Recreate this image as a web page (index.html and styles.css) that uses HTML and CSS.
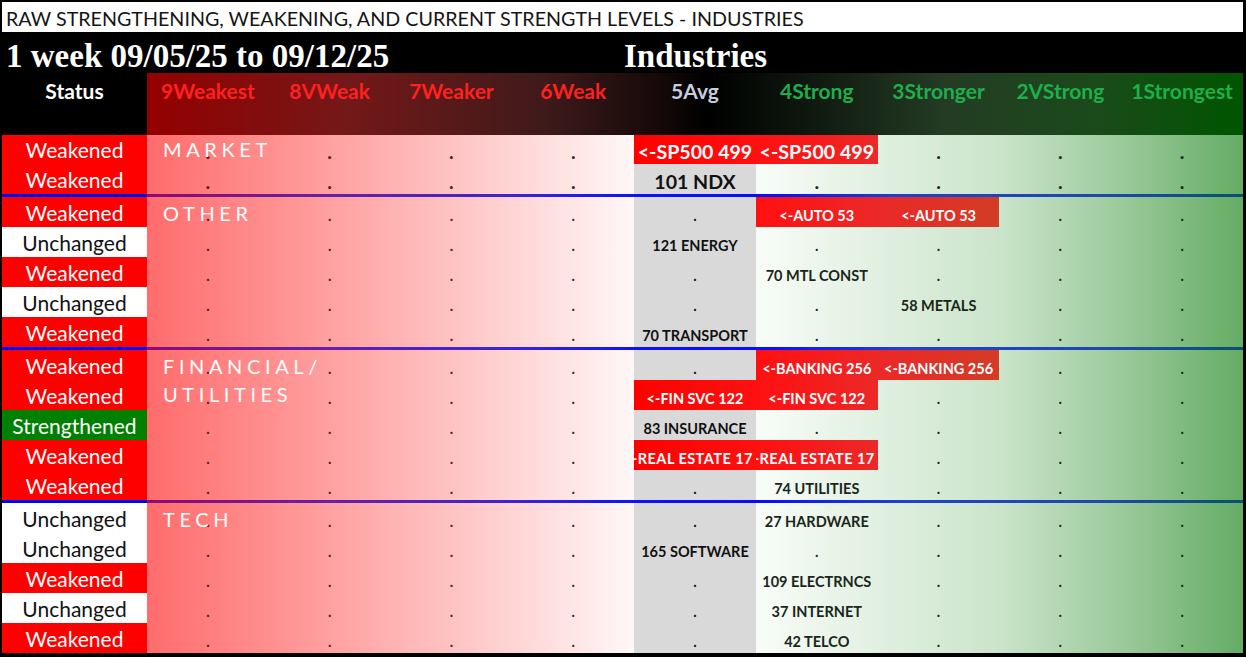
FILE: index.html
```html
<!DOCTYPE html>
<html>
<head>
<meta charset="utf-8">
<link rel="stylesheet" href="styles.css">
</head>
<body>
<div class="frame">
  <div class="title">RAW STRENGTHENING, WEAKENING, AND CURRENT STRENGTH LEVELS - INDUSTRIES</div>
  <div class="head1"><span class="period">1 week 09/05/25 to 09/12/25</span><span class="ind">Industries</span></div>
  <div class="head2">
    <div class="hl st-h">Status</div>
    <div class="hl red-t">9Weakest</div>
    <div class="hl red-t">8VWeak</div>
    <div class="hl red-t">7Weaker</div>
    <div class="hl red-t">6Weak</div>
    <div class="hl avg-t">5Avg</div>
    <div class="hl grn-t">4Strong</div>
    <div class="hl grn-t">3Stronger</div>
    <div class="hl grn-t">2VStrong</div>
    <div class="hl grn-t">1Strongest</div>
  </div>

  <div class="section market">
    <div class="label">MARKET</div>
    <div class="row">
      <div class="st wk">Weakened</div>
      <div class="c l">.</div><div class="c l">.</div><div class="c l">.</div><div class="c l">.</div>
      <div class="c red r5">&lt;-SP500 499</div>
      <div class="c red r6">&lt;-SP500 499</div>
      <div class="c g">.</div><div class="c g">.</div><div class="c g">.</div>
    </div>
    <div class="row">
      <div class="st wk">Weakened</div>
      <div class="c l">.</div><div class="c l">.</div><div class="c l">.</div><div class="c l">.</div>
      <div class="c m">101 NDX</div>
      <div class="c g">.</div><div class="c g">.</div><div class="c g">.</div><div class="c g">.</div>
    </div>
  </div>
  <div class="sep"></div>

  <div class="section">
    <div class="label">OTHER</div>
    <div class="row">
      <div class="st wk">Weakened</div>
      <div class="c l">.</div><div class="c l">.</div><div class="c l">.</div><div class="c l">.</div>
      <div class="c m">.</div>
      <div class="c red r6">&lt;-AUTO 53</div>
      <div class="c red r7">&lt;-AUTO 53</div>
      <div class="c g">.</div><div class="c g">.</div>
    </div>
    <div class="row">
      <div class="st un">Unchanged</div>
      <div class="c l">.</div><div class="c l">.</div><div class="c l">.</div><div class="c l">.</div>
      <div class="c m">121 ENERGY</div>
      <div class="c g">.</div><div class="c g">.</div><div class="c g">.</div><div class="c g">.</div>
    </div>
    <div class="row">
      <div class="st wk">Weakened</div>
      <div class="c l">.</div><div class="c l">.</div><div class="c l">.</div><div class="c l">.</div>
      <div class="c m">.</div>
      <div class="c g">70 MTL CONST</div>
      <div class="c g">.</div><div class="c g">.</div><div class="c g">.</div>
    </div>
    <div class="row">
      <div class="st un">Unchanged</div>
      <div class="c l">.</div><div class="c l">.</div><div class="c l">.</div><div class="c l">.</div>
      <div class="c m">.</div>
      <div class="c g">.</div>
      <div class="c g">58 METALS</div>
      <div class="c g">.</div><div class="c g">.</div>
    </div>
    <div class="row">
      <div class="st wk">Weakened</div>
      <div class="c l">.</div><div class="c l">.</div><div class="c l">.</div><div class="c l">.</div>
      <div class="c m">70 TRANSPORT</div>
      <div class="c g">.</div><div class="c g">.</div><div class="c g">.</div><div class="c g">.</div>
    </div>
  </div>
  <div class="sep"></div>

  <div class="section">
    <div class="label">FINANCIAL/<br>UTILITIES</div>
    <div class="row">
      <div class="st wk">Weakened</div>
      <div class="c l">.</div><div class="c l">.</div><div class="c l">.</div><div class="c l">.</div>
      <div class="c m">.</div>
      <div class="c red r6">&lt;-BANKING 256</div>
      <div class="c red r7">&lt;-BANKING 256</div>
      <div class="c g">.</div><div class="c g">.</div>
    </div>
    <div class="row">
      <div class="st wk">Weakened</div>
      <div class="c l">.</div><div class="c l">.</div><div class="c l">.</div><div class="c l">.</div>
      <div class="c red r5">&lt;-FIN SVC 122</div>
      <div class="c red r6">&lt;-FIN SVC 122</div>
      <div class="c g">.</div><div class="c g">.</div><div class="c g">.</div>
    </div>
    <div class="row">
      <div class="st sg">Strengthened</div>
      <div class="c l">.</div><div class="c l">.</div><div class="c l">.</div><div class="c l">.</div>
      <div class="c m">83 INSURANCE</div>
      <div class="c g">.</div><div class="c g">.</div><div class="c g">.</div><div class="c g">.</div>
    </div>
    <div class="row">
      <div class="st wk">Weakened</div>
      <div class="c l">.</div><div class="c l">.</div><div class="c l">.</div><div class="c l">.</div>
      <div class="c red r5 wide">&lt;-REAL ESTATE 17</div>
      <div class="c red r6 wide">&lt;-REAL ESTATE 17</div>
      <div class="c g">.</div><div class="c g">.</div><div class="c g">.</div>
    </div>
    <div class="row">
      <div class="st wk">Weakened</div>
      <div class="c l">.</div><div class="c l">.</div><div class="c l">.</div><div class="c l">.</div>
      <div class="c m">.</div>
      <div class="c g">74 UTILITIES</div>
      <div class="c g">.</div><div class="c g">.</div><div class="c g">.</div>
    </div>
  </div>
  <div class="sep"></div>

  <div class="section">
    <div class="label">TECH</div>
    <div class="row">
      <div class="st un">Unchanged</div>
      <div class="c l">.</div><div class="c l">.</div><div class="c l">.</div><div class="c l">.</div>
      <div class="c m">.</div>
      <div class="c g">27 HARDWARE</div>
      <div class="c g">.</div><div class="c g">.</div><div class="c g">.</div>
    </div>
    <div class="row">
      <div class="st un">Unchanged</div>
      <div class="c l">.</div><div class="c l">.</div><div class="c l">.</div><div class="c l">.</div>
      <div class="c m">165 SOFTWARE</div>
      <div class="c g">.</div><div class="c g">.</div><div class="c g">.</div><div class="c g">.</div>
    </div>
    <div class="row">
      <div class="st wk">Weakened</div>
      <div class="c l">.</div><div class="c l">.</div><div class="c l">.</div><div class="c l">.</div>
      <div class="c m">.</div>
      <div class="c g">109 ELECTRNCS</div>
      <div class="c g">.</div><div class="c g">.</div><div class="c g">.</div>
    </div>
    <div class="row">
      <div class="st un">Unchanged</div>
      <div class="c l">.</div><div class="c l">.</div><div class="c l">.</div><div class="c l">.</div>
      <div class="c m">.</div>
      <div class="c g">37 INTERNET</div>
      <div class="c g">.</div><div class="c g">.</div><div class="c g">.</div>
    </div>
    <div class="row">
      <div class="st wk">Weakened</div>
      <div class="c l">.</div><div class="c l">.</div><div class="c l">.</div><div class="c l">.</div>
      <div class="c m">.</div>
      <div class="c g">42 TELCO</div>
      <div class="c g">.</div><div class="c g">.</div><div class="c g">.</div>
    </div>
  </div>
</div>
</body>
</html>
```

FILE: styles.css
```css
body {
  margin: 0;
  background: #fff;
}

.frame {
  width: 1246px;
  height: 657px;
  box-sizing: border-box;
  border-style: solid;
  border-color: #000;
  border-width: 2px 3px 4px 2px;
  background: #fff;
  font-family: Lato, "Open Sans", sans-serif;
  overflow: hidden;
}

.title {
  height: 30px;
  box-sizing: border-box;
  padding: 5px 0 0 4px;
  font-size: 19.7px;
  line-height: 24px;
  color: #151515;
  white-space: nowrap;
}

.head1 {
  height: 41px;
  box-sizing: border-box;
  padding: 5px 0 0 4px;
  background: #000;
  color: #fff;
  font-family: "Liberation Serif", "Times New Roman", serif;
  font-weight: bold;
  font-size: 33px;
  line-height: 38px;
  display: flex;
  white-space: nowrap;
}

.period {
  flex: 0 0 618px;
}

.head2 {
  height: 61.5px;
  display: grid;
  grid-template-columns: 145px repeat(9, 1fr);
  background: linear-gradient(to right,
    #000 0, #000 145px,
    #940000 145px,
    #741818 345px,
    #3e1a1a 545px,
    #120808 665px,
    #000 705px,
    #0c140c 790px,
    #243c24 945px,
    #1a4a1a 1095px,
    #005500 1241px);
}

.hl {
  text-align: center;
  font-weight: bold;
  font-size: 21px;
  line-height: 25px;
  padding-top: 5px;
  white-space: nowrap;
}

.st-h { color: #fff; }
.red-t { color: #ff2020; }
.avg-t { color: #c6cedf; }
.grn-t { color: #1fae4c; }

.section {
  position: relative;
  background: linear-gradient(to right,
    #fff 0, #fff 145px,
    #ff6c6c 145px,
    #fff7f7 632px,
    #d9d9d9 632px,
    #d9d9d9 754px,
    #f8fcf8 754px,
    #cae4ca 998px,
    #9cca9c 1118px,
    #64ac64 1241px);
}

.row {
  height: 30px;
  display: grid;
  grid-template-columns: 145px repeat(9, 1fr);
}

.market .row {
  height: 29.75px;
}

.label {
  position: absolute;
  left: 161px;
  top: 2px;
  color: #fff;
  font-size: 20px;
  line-height: 28px;
  letter-spacing: 4.6px;
  white-space: nowrap;
  pointer-events: none;
}

.market .label {
  top: 0;
}

.st {
  display: flex;
  align-items: center;
  justify-content: center;
  font-size: 21px;
  white-space: nowrap;
}

.wk { background: #ff0000; color: #fff; }
.un { background: #fff; color: #111; }
.sg { background: #008000; color: #fff; }

.c {
  display: flex;
  justify-content: center;
  align-items: flex-end;
  padding-bottom: 3px;
  box-sizing: border-box;
  overflow: hidden;
  white-space: nowrap;
  font-weight: bold;
  font-size: 14.5px;
  color: #111;
  min-width: 0;
}

.market .c {
  font-size: 19.6px;
  padding-bottom: 1.5px;
}

.c.l { color: #4a2020; }
.c.m { color: #111; }
.c.g { color: #1a261a; }

.c.red { color: #fff; }
.c.wide {
  letter-spacing: 0.45px;
  justify-content: flex-end;
  padding-right: 3px;
}
.r5 { background: linear-gradient(to right, #ff0000, #ff1010); }
.r6 { background: linear-gradient(to right, #ff1010, #ec2828); }
.r7 { background: linear-gradient(to right, #ec2828, #d23c26); }

.sep {
  height: 3px;
  background: linear-gradient(to right,
    #0000ff 0, #0000ff 145px,
    #8e0a74 145px,
    #6a1eaa 330px,
    #3a22dc 520px,
    #1010ff 632px,
    #0a0aff 754px,
    #2040d0 900px,
    #1f48b0 1100px,
    #0a5070 1241px);
}
```
